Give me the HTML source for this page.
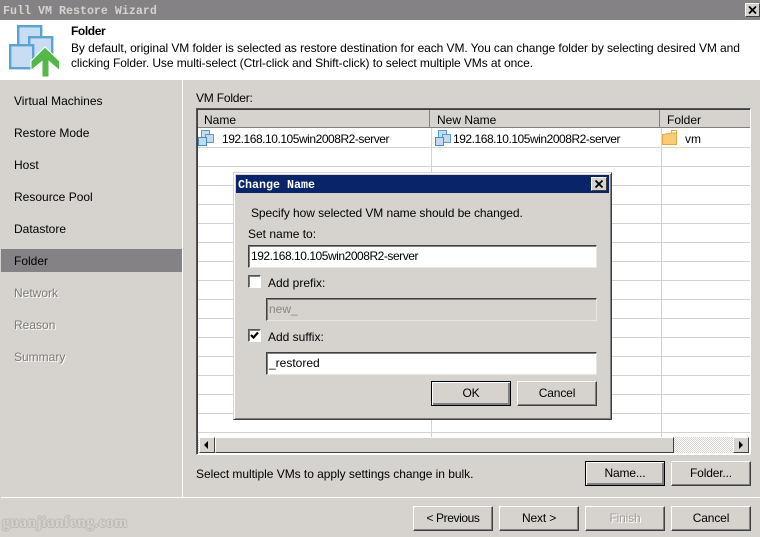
<!DOCTYPE html>
<html><head><meta charset="utf-8">
<style>
html,body{margin:0;padding:0}
body{width:760px;height:537px;position:relative;overflow:hidden;background:#d6d3ce;font-family:"Liberation Sans",sans-serif;font-size:12px;color:#000}
.a{position:absolute}
.t{position:absolute;white-space:nowrap;line-height:14px}
.ip{letter-spacing:-.46px}
.btn{position:absolute;box-sizing:border-box;width:80px;height:25px;background:#d6d3ce;border:1px solid;border-color:#fff #404040 #404040 #fff;box-shadow:inset -1px -1px 0 #808080;text-align:center;line-height:23px;letter-spacing:-.15px}
.def{border:1px solid #000;box-shadow:inset 1px 1px 0 #fff,inset -2px -2px 0 #808080}
.dis{color:#a09d98;text-shadow:1px 1px 0 #fff}
.inp{position:absolute;box-sizing:border-box;background:#fff;border:1px solid;border-color:#404040 #e8e6e2 #e8e6e2 #404040;box-shadow:inset 1px 1px 0 #808080;line-height:21px;padding-left:2px;white-space:nowrap}
.chk{position:absolute;box-sizing:border-box;width:13px;height:13px;background:#fff;border:1px solid;border-color:#555 #fff #fff #555;box-shadow:inset 1px 1px 0 #808080}
.hl{position:absolute;left:198px;width:552px;height:1px;background:#d6d3ce}
.sb{position:absolute;box-sizing:border-box;width:16px;height:16px;background:#d6d3ce;border:1px solid;border-color:#fff #404040 #404040 #fff}
.nav{left:14px}
</style></head><body>

<div class="a" style="left:0;top:0;width:760px;height:20px;background:#848284"></div>
<div class="t" style="left:3px;top:4px;font-family:'Liberation Mono',monospace;font-weight:bold;font-size:11.67px;color:#d6d3ce">Full VM Restore Wizard</div>
<div class="a" style="left:745px;top:3px;width:15px;height:14px;box-sizing:border-box;background:#d6d3ce;border:1px solid;border-color:#fff #404040 #404040 #fff;">
<svg width="13" height="12" style="display:block"><path d="M3 2.500L10 9.500M10 2.500L3 9.500" stroke="#000" stroke-width="1.800"/></svg></div>

<div class="a" style="left:0;top:20px;width:760px;height:60px;background:#fff"></div>
<svg class="a" style="left:0;top:20px" width="70" height="60" viewBox="0 20 70 60">
<rect x="18.200" y="26.200" width="23" height="25" fill="#c8dcf3" stroke="#5ba3d0" stroke-width="2.400"/>
<rect x="29.200" y="37.200" width="23" height="24" fill="#c8dcf3" stroke="#5ba3d0" stroke-width="2.400"/>
<rect x="10.200" y="45.200" width="23" height="23" fill="#c8dcf3" stroke="#5ba3d0" stroke-width="2.400"/>
<path d="M45 47L59.500 61V70.500L49 61.500V77H42V61.500L31 70.500V61Z" fill="#52b848" stroke="#fff" stroke-width="1"/>
</svg>
<div class="t" style="left:71px;top:24px;font-weight:bold;letter-spacing:-.4px">Folder</div>
<div class="t" style="left:71px;top:41px;letter-spacing:-.08px">By default, original VM folder is selected as restore destination for each VM. You can change folder by selecting desired VM and</div>
<div class="t" style="left:71px;top:56px;letter-spacing:-.08px">clicking Folder. Use multi-select (Ctrl-click and Shift-click) to select multiple VMs at once.</div>

<div class="a" style="left:182px;top:80px;width:1px;height:417px;background:#fff"></div>
<div class="a" style="left:1px;top:497px;width:759px;height:1px;background:#fff"></div>

<div class="t nav" style="top:94px">Virtual Machines</div>
<div class="t nav" style="top:126px">Restore Mode</div>
<div class="t nav" style="top:158px">Host</div>
<div class="t nav" style="top:190px">Resource Pool</div>
<div class="t nav" style="top:222px">Datastore</div>
<div class="a" style="left:1px;top:249px;width:181px;height:23px;background:#848284"></div>
<div class="t nav" style="top:254px">Folder</div>
<div class="t nav dis" style="top:286px;color:#7d7a75">Network</div>
<div class="t nav dis" style="top:318px;color:#7d7a75">Reason</div>
<div class="t nav dis" style="top:350px;color:#7d7a75">Summary</div>

<div class="t" style="left:196px;top:91px;letter-spacing:-.2px">VM Folder:</div>

<!-- grid -->
<div class="a" style="left:196px;top:108px;width:555px;height:347px;box-sizing:border-box;background:#fff;border:1px solid;border-color:#555 #fff #fff #555;box-shadow:inset 1px 1px 0 #404040"></div>
<div class="a" style="left:198px;top:110px;width:552px;height:18px;background:#d6d3ce;border-bottom:1px solid #808080;box-sizing:border-box"></div>
<div class="a" style="left:429px;top:110px;width:1px;height:17px;background:#808080"></div>
<div class="a" style="left:659px;top:110px;width:1px;height:17px;background:#808080"></div>
<div class="t" style="left:204px;top:113px">Name</div>
<div class="t" style="left:437px;top:113px">New Name</div>
<div class="t" style="left:667px;top:113px">Folder</div>
<div class="a" style="left:431px;top:128px;width:1px;height:309px;background:#d6d3ce"></div>
<div class="a" style="left:661px;top:128px;width:1px;height:309px;background:#d6d3ce"></div>
<div class="hl" style="top:147px"></div><div class="hl" style="top:166px"></div><div class="hl" style="top:185px"></div><div class="hl" style="top:204px"></div><div class="hl" style="top:223px"></div><div class="hl" style="top:242px"></div><div class="hl" style="top:261px"></div><div class="hl" style="top:280px"></div><div class="hl" style="top:299px"></div><div class="hl" style="top:318px"></div><div class="hl" style="top:337px"></div><div class="hl" style="top:356px"></div><div class="hl" style="top:375px"></div><div class="hl" style="top:394px"></div><div class="hl" style="top:413px"></div><div class="hl" style="top:432px"></div>

<svg class="a" style="left:198px;top:130px" width="17" height="17">
<rect x="3.500" y="0.500" width="8" height="8" fill="#c5d9f1" stroke="#5a9fcb"/>
<rect x="7.500" y="4.500" width="8" height="8" fill="#c5d9f1" stroke="#5a9fcb"/>
<rect x="0.500" y="7.500" width="8" height="8" fill="#c5d9f1" stroke="#3f8fc4"/>
</svg>
<svg class="a" style="left:435px;top:130px" width="17" height="17">
<rect x="3.500" y="0.500" width="8" height="8" fill="#c5d9f1" stroke="#5a9fcb"/>
<rect x="7.500" y="4.500" width="8" height="8" fill="#c5d9f1" stroke="#5a9fcb"/>
<rect x="0.500" y="7.500" width="8" height="8" fill="#c5d9f1" stroke="#3f8fc4"/>
</svg>
<svg class="a" style="left:662px;top:130px" width="16" height="15">
<path d="M9.500 3.500V0.500H14.500V3.500" fill="#fff" stroke="#e8a93a"/>
<path d="M0.500 14.500V4.500L9.500 3L14.500 3V14.500Z" fill="#f8cb76" stroke="#e8a93a"/>
</svg>
<div class="t ip" style="left:222px;top:132px">192.168.10.105win2008R2-server</div>
<div class="t ip" style="left:453px;top:132px">192.168.10.105win2008R2-server</div>
<div class="t" style="left:685px;top:132px">vm</div>

<!-- scrollbar -->
<div class="a" style="left:198px;top:437px;width:551px;height:16px;background:repeating-conic-gradient(#d6d3ce 0 25%,#fff 0 50%) 0 0/2px 2px"></div>
<div class="sb" style="left:199px;top:437px"><div class="a" style="left:4px;top:3px;width:0;height:0;border:4px solid transparent;border-right:4px solid #000;border-left:0"></div></div>
<div class="a" style="left:215px;top:437px;width:459px;height:16px;box-sizing:border-box;background:#d6d3ce;border:1px solid;border-color:#fff #404040 #404040 #fff"></div>
<div class="sb" style="left:733px;top:437px"><div class="a" style="left:5px;top:3px;width:0;height:0;border:4px solid transparent;border-left:4px solid #000;border-right:0"></div></div>

<div class="t" style="left:196px;top:467px;letter-spacing:-.04px">Select multiple VMs to apply settings change in bulk.</div>
<div class="btn def" style="left:585px;top:461px">Name...</div>
<div class="btn" style="left:671px;top:461px">Folder...</div>

<div class="btn" style="left:413px;top:506px;letter-spacing:-.4px">&lt; Previous</div>
<div class="btn" style="left:499px;top:506px">Next &gt;</div>
<div class="btn dis" style="left:585px;top:506px">Finish</div>
<div class="btn" style="left:671px;top:506px">Cancel</div>

<div class="t" style="left:2px;top:516px;font-family:'Liberation Serif',serif;font-weight:bold;font-size:15.500px;letter-spacing:.45px;color:#d6d3ce;text-shadow:-1px 0 0 #bbb8b3,1px 0 0 #bbb8b3,0 -1px 0 #bbb8b3,0 1px 0 #bbb8b3">guanjianfeng.com</div>

<!-- dialog -->
<div class="a" style="left:233px;top:172px;width:379px;height:248px;box-sizing:border-box;background:#d6d3ce;border:1px solid;border-color:#d6d3ce #404040 #404040 #d6d3ce;box-shadow:inset 1px 1px 0 #fff,inset -1px -1px 0 #808080"></div>
<div class="a" style="left:236px;top:175px;width:373px;height:18px;background:#0a246a"></div>
<div class="t" style="left:238px;top:178px;font-family:'Liberation Mono',monospace;font-weight:bold;font-size:11.67px;color:#fff">Change Name</div>
<div class="a" style="left:591px;top:177px;width:16px;height:14px;box-sizing:border-box;background:#d6d3ce;border:1px solid;border-color:#fff #404040 #404040 #fff">
<svg width="14" height="12" style="display:block"><path d="M3.500 2.500L10.500 9.500M10.500 2.500L3.500 9.500" stroke="#000" stroke-width="1.800"/></svg></div>
<div class="t" style="left:251px;top:206px;letter-spacing:-.08px">Specify how selected VM name should be changed.</div>
<div class="t" style="left:248px;top:227px">Set name to:</div>
<div class="inp ip" style="left:248px;top:245px;width:349px;height:23px">192.168.10.105win2008R2-server</div>
<div class="chk" style="left:248px;top:275px"></div>
<div class="t" style="left:268px;top:276px">Add prefix:</div>
<div class="inp" style="left:266px;top:298px;width:331px;height:23px;background:#d6d3ce;color:#8a8782">new_</div>
<div class="chk" style="left:248px;top:329px"><svg width="11" height="11" style="display:block"><path d="M2 5L4.500 7.500L9 2.500" fill="none" stroke="#000" stroke-width="2.200"/></svg></div>
<div class="t" style="left:268px;top:330px">Add suffix:</div>
<div class="inp" style="left:266px;top:352px;width:331px;height:23px">_restored</div>
<div class="btn def" style="left:431px;top:381px">OK</div>
<div class="btn" style="left:517px;top:381px">Cancel</div>
</body></html>
